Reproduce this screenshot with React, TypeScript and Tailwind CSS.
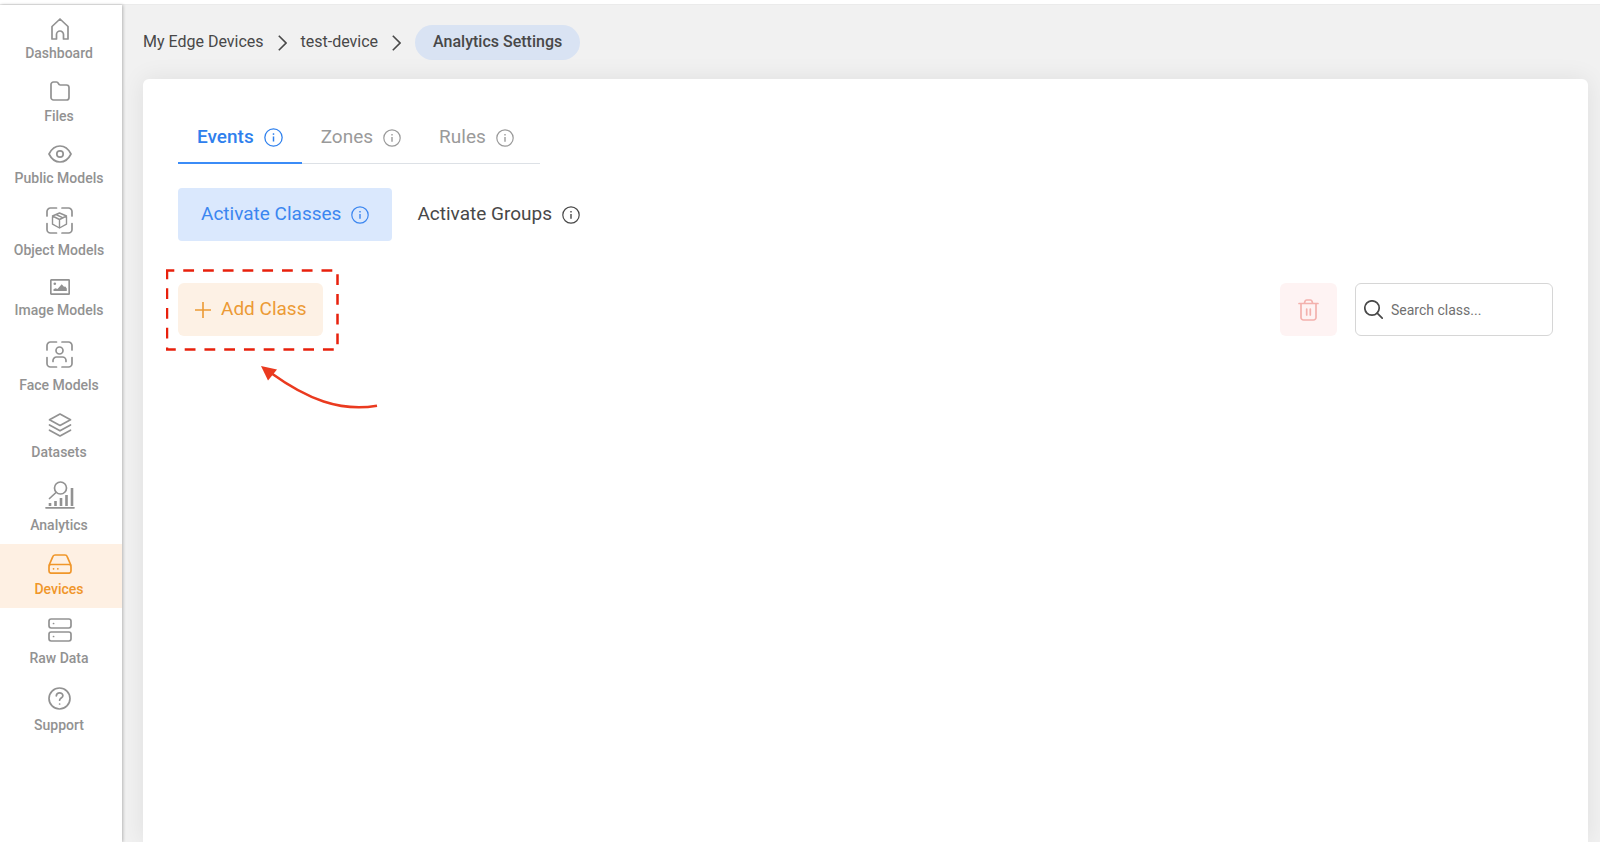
import { useState } from 'react';
import type { ReactNode } from 'react';
import clsx from 'clsx';

interface NavItem {
  label: string;
  boxClass: string;
  icon: ReactNode;
}

const stroke = {
  fill: 'none',
  stroke: 'currentColor',
  strokeWidth: 1.7,
  strokeLinecap: 'round' as const,
  strokeLinejoin: 'round' as const,
};

const ScanCorners = () => (
  <path d="M1 9V4.500A3.500 3.500 0 0 1 4.500 1H10.500M16 1h6.500A3.500 3.500 0 0 1 26 4.500V9M26 16.500v6a3.500 3.500 0 0 1-3.500 3.500H16M10.500 26H4.500A3.500 3.500 0 0 1 1 22.500v-6" />
);

const navItems: NavItem[] = [
  {
    label: 'Dashboard',
    boxClass: 'h-[27px]',
    icon: (
      <svg width="18" height="22" viewBox="0 0 18 22" {...stroke}>
        <path d="M1 8.500 9 1l8 7.500V21h-4.500v-4.500a3.500 3.500 0 0 0-7 0V21H1Z" />
      </svg>
    ),
  },
  {
    label: 'Files',
    boxClass: 'h-[28px]',
    icon: (
      <svg width="20" height="20" viewBox="0 0 20 20" {...stroke}>
        <path d="M1 3.500A2.500 2.500 0 0 1 3.500 1h3c1 0 1.500.6 1.800 1.400.4 1 .9 1.600 2 1.600h6.200A2.500 2.500 0 0 1 19 6.500v10a2.500 2.500 0 0 1-2.500 2.500h-13A2.500 2.500 0 0 1 1 16.500Z" />
      </svg>
    ),
  },
  {
    label: 'Public Models',
    boxClass: 'h-[27px]',
    icon: (
      <svg width="24" height="18" viewBox="0 0 24 18" {...stroke}>
        <path d="M1 9c2.500-5 6.500-8 11-8s8.500 3 11 8c-2.500 5-6.500 8-11 8S3.500 14 1 9Z" />
        <circle cx="12" cy="9" r="3.200" />
      </svg>
    ),
  },
  {
    label: 'Object Models',
    boxClass: 'h-[37px]',
    icon: (
      <svg width="27" height="27" viewBox="0 0 27 27" {...stroke}>
        <ScanCorners />
        <path strokeWidth="1.400" d="m13.500 6 7 3v8.200l-7 3.800-7-3.800V9ZM6.500 9l7 3.500 7-3.500M13.500 12.500V21M10 7.500l7 3.300" />
      </svg>
    ),
  },
  {
    label: 'Image Models',
    boxClass: 'h-[25px]',
    icon: (
      <svg width="20" height="16" viewBox="0 0 20 16" {...stroke}>
        <rect x="0.800" y="0.800" width="18.400" height="14.400" rx="0.800" />
        <circle cx="4.800" cy="4.800" r="1.300" fill="currentColor" stroke="none" />
        <path d="M3.500 12v-1.800l2-1 2 .8 4.200-4.800 2.300 2.600 1.300-.4 1.500 2V12Z" fill="currentColor" stroke="none" />
      </svg>
    ),
  },
  {
    label: 'Face Models',
    boxClass: 'h-[40px]',
    icon: (
      <svg width="27" height="27" viewBox="0 0 27 27" {...stroke}>
        <ScanCorners />
        <circle cx="13.500" cy="9.500" r="3.500" />
        <path d="M7 20.500v-1a3.500 3.500 0 0 1 3.500-3.500h6a3.500 3.500 0 0 1 3.500 3.500v1" />
      </svg>
    ),
  },
  {
    label: 'Datasets',
    boxClass: 'h-[32px]',
    icon: (
      <svg width="24" height="24" viewBox="0 0 24 24" {...stroke}>
        <path d="m12 1 10.500 5.800L12 12.500 1.500 6.800ZM1.500 12 12 17.800 22.500 12M1.500 17.200 12 23l10.500-5.800" />
      </svg>
    ),
  },
  {
    label: 'Analytics',
    boxClass: 'h-[38px]',
    icon: (
      <svg width="30" height="28" viewBox="0 0 30 28" {...stroke}>
        <circle cx="15.500" cy="7" r="6" />
        <path d="m11 11.500-6.500 6M1 26.800h28" />
        <path strokeWidth="2.600" strokeLinecap="butt" d="M5 22v3M10.500 20v5M16 17v8M21.500 14v11M27 7v18" />
      </svg>
    ),
  },
  {
    label: 'Devices',
    boxClass: 'h-[29px]',
    icon: (
      <svg width="24" height="20" viewBox="0 0 24 20" {...stroke}>
        <path d="m1.200 11 3.500-8.200A2.600 2.600 0 0 1 7 1h10c1 0 1.900.7 2.300 1.800L22.800 11" />
        <rect x="1" y="10.500" width="22" height="8.700" rx="2.200" />
        <path d="M5.500 14.800h.1M9.800 14.800h.1" />
      </svg>
    ),
  },
  {
    label: 'Raw Data',
    boxClass: 'h-[34px]',
    icon: (
      <svg width="24" height="24" viewBox="0 0 24 24" {...stroke}>
        <rect x="1" y="1" width="22" height="9" rx="2.200" />
        <rect x="1" y="14" width="22" height="9" rx="2.200" />
        <path d="M5.500 5.500h.1M5.500 18.500h.1" />
      </svg>
    ),
  },
  {
    label: 'Support',
    boxClass: 'h-[32px]',
    icon: (
      <svg width="23" height="23" viewBox="0 0 23 23" {...stroke}>
        <circle cx="11.500" cy="11.500" r="10.500" />
        <path d="M8.300 8.800c.2-1.900 1.500-3 3.300-3s3.300 1.100 3.300 2.900c0 2.300-3.300 2.400-3.300 4.500M11.600 17h.05" />
      </svg>
    ),
  },
];

function InfoIcon({ size = 18 }: { size?: number }) {
  return (
    <svg width={size} height={size} viewBox="0 0 18 18" fill="none" stroke="currentColor" className="shrink-0">
      <circle cx="9" cy="9" r="8.200" strokeWidth="1.200" />
      <path d="M9 8v4.800" strokeWidth="1.400" />
      <path d="M9 5v1.500" strokeWidth="1.400" />
    </svg>
  );
}

function Chevron() {
  return (
    <svg width="9" height="16" viewBox="0 0 9 16" fill="none" stroke="currentColor" strokeWidth="1.600">
      <path d="m.8.8 7.200 7.200-7.200 7.200" />
    </svg>
  );
}

// Dashed frame and arrow drawn over the Add Class button
function Callout() {
  return (
    <svg
      className="pointer-events-none absolute -left-3 -top-3.5"
      width="216"
      height="144"
      viewBox="166 269 216 144"
      fill="none"
      aria-hidden="true"
    >
      <path
        d="M167 270.500H337.500V349.500H167Z"
        stroke="#e8200c"
        strokeWidth="2.500"
        strokeDasharray="10.800 8.950"
        strokeDashoffset="3.500"
      />
      <path d="M377 405.700C340 412 307 399 271 373" stroke="#ea3a1f" strokeWidth="2.500" />
      <path d="m261 366 16 3.500-9 11Z" fill="#ea3a1f" />
    </svg>
  );
}

function Sidebar() {
  return (
    <nav className="z-10 flex w-[122px] shrink-0 flex-col bg-white pt-[5px] shadow-[1px_0_3px_rgba(0,0,0,0.25)]">
      {navItems.map((item) => {
        const active = item.label === 'Devices';
        return (
          <a
            key={item.label}
            href="#"
            className={clsx(
              'flex flex-col items-center gap-[3px] pt-[5px] pr-1 pb-[11px] text-sm leading-4 font-medium',
              active ? 'bg-[#fef0e3] text-[#f0962a]' : 'text-[#929292]'
            )}
          >
            <span className={clsx('flex items-center pl-px', item.boxClass)}>{item.icon}</span>
            <span>{item.label}</span>
          </a>
        );
      })}
    </nav>
  );
}

const tabs = ['Events', 'Zones', 'Rules'];

export default function App() {
  const [tab, setTab] = useState('Events');
  const [search, setSearch] = useState('');

  return (
    <div className="flex min-h-screen flex-col bg-white pt-1 font-['Roboto',sans-serif] text-[#484848]">
      <div className="flex flex-1 border-t border-[#ebebeb] bg-[#f1f1f1]">
        <Sidebar />

        <main className="flex min-w-0 flex-1 flex-col pr-3 pl-[21px]">
          <div className="flex items-center pt-5 pb-[19px] text-base leading-5">
            <a href="#" className="pb-0.5">My Edge Devices</a>
            <span className="mx-3.5"><Chevron /></span>
            <a href="#" className="pb-0.5">test-device</a>
            <span className="mx-3.5"><Chevron /></span>
            <span className="rounded-full bg-[#d9e3f3] px-[18px] pt-[7px] pb-2 font-medium">
              Analytics Settings
            </span>
          </div>

          <section className="flex-1 rounded-t-md bg-white px-[35px] pt-8 shadow-[0_0_24px_rgba(0,0,0,0.08)]">
            <div role="tablist" className="flex w-fit border-b border-[#dde1e6] pr-[7px]">
              {tabs.map((name) => (
                <button
                  key={name}
                  role="tab"
                  aria-selected={tab === name}
                  onClick={() => setTab(name)}
                  className={clsx(
                    '-mb-px flex h-[53px] items-center gap-2.5 border-b-2 px-[19px] pt-0.5 text-[19px]',
                    tab === name
                      ? 'border-[#3b8cf7] font-medium text-[#2f80ed]'
                      : 'border-transparent text-[#9a9a9a]'
                  )}
                >
                  {name}
                  <InfoIcon size={tab === name ? 19 : 18} />
                </button>
              ))}
            </div>

            <div className="mt-6 flex gap-0.5 text-[19px]">
              <button className="flex h-[53px] items-center gap-2.5 rounded bg-[#dae8fd] px-[23px] text-[#3b86f0]">
                Activate Classes
                <InfoIcon />
              </button>
              <button className="flex h-[53px] items-center gap-2.5 rounded px-[23px]">
                Activate Groups
                <InfoIcon />
              </button>
            </div>

            <div className="mt-[42px] flex items-center justify-between">
              <div className="relative">
                <button className="flex h-[53px] items-center gap-2.5 rounded-md bg-[#fdf1e5] px-[17px] text-[19px] text-[#ec9a35]">
                  <svg width="16" height="16" viewBox="0 0 16 16" fill="none" stroke="currentColor" strokeWidth="1.600">
                    <path d="M8 0v16M0 8h16" />
                  </svg>
                  Add Class
                </button>
                <Callout />
              </div>

              <div className="flex items-center gap-[18px]">
                <button
                  aria-label="Delete class"
                  className="flex h-[53px] w-[57px] items-center justify-center rounded-md bg-[#fef3f3] text-[#f3b1ad]"
                >
                  <svg width="21" height="22" viewBox="0 0 21 22" {...stroke}>
                    <path d="M1 4.500h19M3 4.500V18.500a2.500 2.500 0 0 0 2.500 2.500h10a2.500 2.500 0 0 0 2.500-2.500V4.500M6.300 4.500 7 2.200A1.700 1.700 0 0 1 8.600 1h3.800A1.700 1.700 0 0 1 14 2.200l.7 2.300M8.700 10v6M12.300 10v6" />
                  </svg>
                </button>
                <label className="flex h-[53px] w-[198px] items-center gap-2 rounded-md border border-[#d6d6d6] px-2">
                  <svg width="19" height="19" viewBox="0 0 19 19" {...stroke} className="shrink-0">
                    <circle cx="8" cy="8" r="7.200" />
                    <path d="m13.200 13.200 5 5" />
                  </svg>
                  <input
                    type="text"
                    aria-label="Search class"
                    placeholder="Search class..."
                    value={search}
                    onChange={(e) => setSearch(e.target.value)}
                    className="w-full min-w-0 text-sm outline-none placeholder:text-[#707070]"
                  />
                </label>
              </div>
            </div>
          </section>
        </main>
      </div>
    </div>
  );
}
